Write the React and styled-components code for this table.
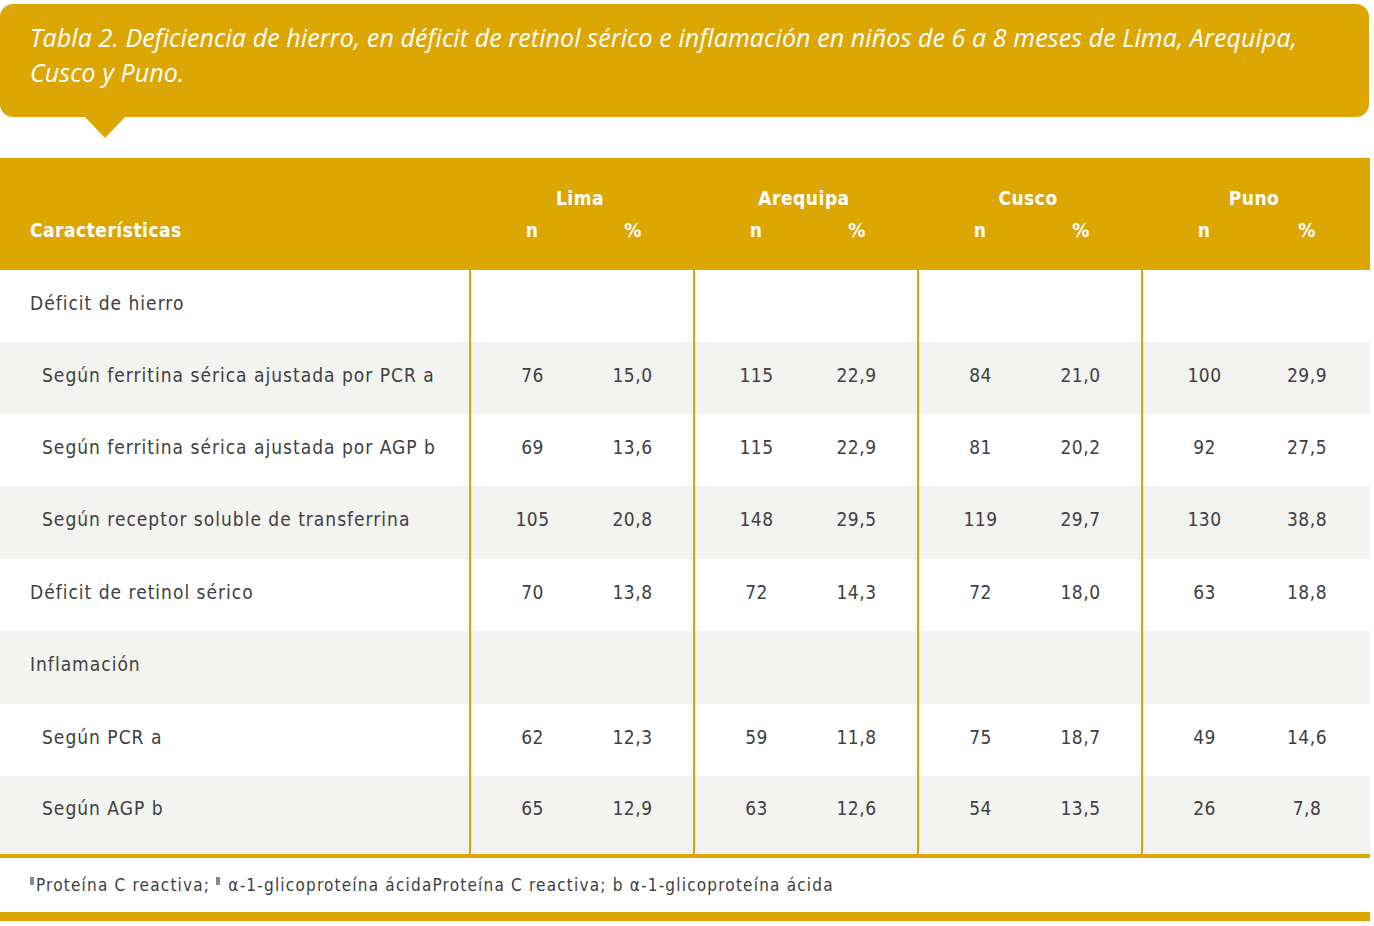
import React from "react";
import styled, { createGlobalStyle } from "styled-components";

const GOLD = "#dca704";
const TEXT = "#404040";

const Global = createGlobalStyle`
  html, body { margin: 0; padding: 0; background: #fff; }
  body { font-family: "DejaVu Sans Condensed", "DejaVu Sans", sans-serif; }
`;

const Page = styled.div`
  width: 1374px;
  padding-top: 4px;
`;

const TitleBox = styled.div`
  position: relative;
  width: 1369px;
  box-sizing: border-box;
  height: 113px;
  background: ${GOLD};
  border-radius: 13px;
  padding: 16px 30px 0 30px;
  color: #fff;
  font-family: "Open Sans", Lato, sans-serif;
  font-style: italic;
  font-size: 25px;
  letter-spacing: 0.1px;
  line-height: 35px;
  &::after {
    content: "";
    position: absolute;
    left: 85px;
    top: 100%;
    border-left: 20px solid transparent;
    border-right: 20px solid transparent;
    border-top: 21px solid ${GOLD};
  }
`;

const Table = styled.table`
  margin-top: 41px;
  width: 1370px;
  border-collapse: collapse;
  table-layout: fixed;
  border-bottom: 4px solid ${GOLD};
`;

const Head = styled.thead`
  background: ${GOLD};
  color: #fff;
`;

const Th = styled.th`
  height: 56px;
  padding: 0;
  font-size: 19px;
  font-weight: bold;
  letter-spacing: 0.5px;
  text-align: ${(p) => (p.$left ? "left" : "center")};
  vertical-align: ${(p) => (p.$top ? "top" : "bottom")};
  padding-left: ${(p) => (p.$left ? "30px" : "0")};
  padding-top: ${(p) => (p.$top ? "5px" : "0")};
  padding-bottom: ${(p) => (p.$top ? "0" : "5px")};
  box-sizing: border-box;
`;

const GroupTh = styled(Th)`
  padding-right: 4px;
`;

const SubTh = styled(Th)`
  padding-left: ${(p) => (p.$n ? "12px" : "0")};
  padding-right: ${(p) => (p.$n ? "0" : "10px")};
`;

const Row = styled.tr`
  height: ${(p) => (p.$h ? p.$h : 72)}px;
  background: ${(p) => (p.$gray ? "#f3f3f2" : "#fff")};
  & > td {
    padding-bottom: ${(p) => (p.$h === 80 ? "15px" : "7px")};
  }
`;

const Label = styled.td`
  padding: 0 0 7px ${(p) => (p.$sub ? "42px" : "30px")};
  font-size: 19px;
  letter-spacing: 1px;
  color: ${TEXT};
  white-space: nowrap;
`;

const Num = styled.td`
  padding: 0 0 7px 0;
  padding-left: ${(p) => (p.$n ? "12px" : "0")};
  padding-right: ${(p) => (p.$n ? "0" : "10px")};
  border-left: ${(p) => (p.$n ? `2px solid ${GOLD}` : "none")};
  text-align: center;
  font-size: 19px;
  letter-spacing: 0.5px;
  color: ${TEXT};
`;

const Footnote = styled.div`
  height: 54px;
  display: flex;
  align-items: center;
  padding-left: 30px;
  font-size: 17px;
  letter-spacing: 1.2px;
  color: ${TEXT};
  white-space: nowrap;
`;

const FootText = styled.span`
  white-space: pre;
`;

const Tofu = styled.span`
  display: inline-block;
  width: 4px;
  height: 8px;
  background: #8a8a8a;
  margin-right: 2px;
  vertical-align: 6px;
`;

const BottomBar = styled.div`
  width: 1370px;
  height: 9px;
  background: ${GOLD};
`;

const rows = [
  { label: "Déficit de hierro", sub: false, vals: null },
  { label: "Según ferritina sérica ajustada por PCR a", sub: true, vals: ["76", "15,0", "115", "22,9", "84", "21,0", "100", "29,9"] },
  { label: "Según ferritina sérica ajustada por AGP b", sub: true, vals: ["69", "13,6", "115", "22,9", "81", "20,2", "92", "27,5"] },
  { label: "Según receptor soluble de transferrina", sub: true, vals: ["105", "20,8", "148", "29,5", "119", "29,7", "130", "38,8"], h: 73 },
  { label: "Déficit de retinol sérico", sub: false, vals: ["70", "13,8", "72", "14,3", "72", "18,0", "63", "18,8"] },
  { label: "Inflamación", sub: false, vals: null, h: 73 },
  { label: "Según PCR a", sub: true, vals: ["62", "12,3", "59", "11,8", "75", "18,7", "49", "14,6"] },
  { label: "Según AGP b", sub: true, vals: ["65", "12,9", "63", "12,6", "54", "13,5", "26", "7,8"], h: 80 },
];

const cities = ["Lima", "Arequipa", "Cusco", "Puno"];
const widths = [470, 112, 112, 112, 112, 112, 112, 112, 116];

export default function App() {
  return (
    <Page>
      <Global />
      <TitleBox>
        Tabla 2. Deficiencia de hierro, en déficit de retinol sérico e inflamación en niños de 6 a 8 meses de Lima, Arequipa,
        <br />
        Cusco y Puno.
      </TitleBox>
      <Table>
        <colgroup>
          {widths.map((w, i) => (
            <col key={i} style={{ width: w }} />
          ))}
        </colgroup>
        <Head>
          <tr>
            <Th $left />
            {cities.map((c) => (
              <GroupTh key={c} colSpan={2}>
                {c}
              </GroupTh>
            ))}
          </tr>
          <tr>
            <Th $left $top>Características</Th>
            {cities.map((c) => (
              <React.Fragment key={c}>
                <SubTh $top $n>n</SubTh>
                <SubTh $top>%</SubTh>
              </React.Fragment>
            ))}
          </tr>
        </Head>
        <tbody>
          {rows.map((r, i) => (
            <Row key={i} $gray={i % 2 === 1} $h={r.h}>
              <Label $sub={r.sub}>{r.label}</Label>
              {Array.from({ length: 8 }).map((_, j) => (
                <Num key={j} $n={j % 2 === 0}>
                  {r.vals ? r.vals[j] : ""}
                </Num>
              ))}
            </Row>
          ))}
        </tbody>
      </Table>
      <Footnote>
        <FootText>
          <Tofu />
          {"Proteína C reactiva; "}
          <Tofu />
          {" α-1-glicoproteína ácidaProteína C reactiva; b α-1-glicoproteína ácida"}
        </FootText>
      </Footnote>
      <BottomBar />
    </Page>
  );
}
